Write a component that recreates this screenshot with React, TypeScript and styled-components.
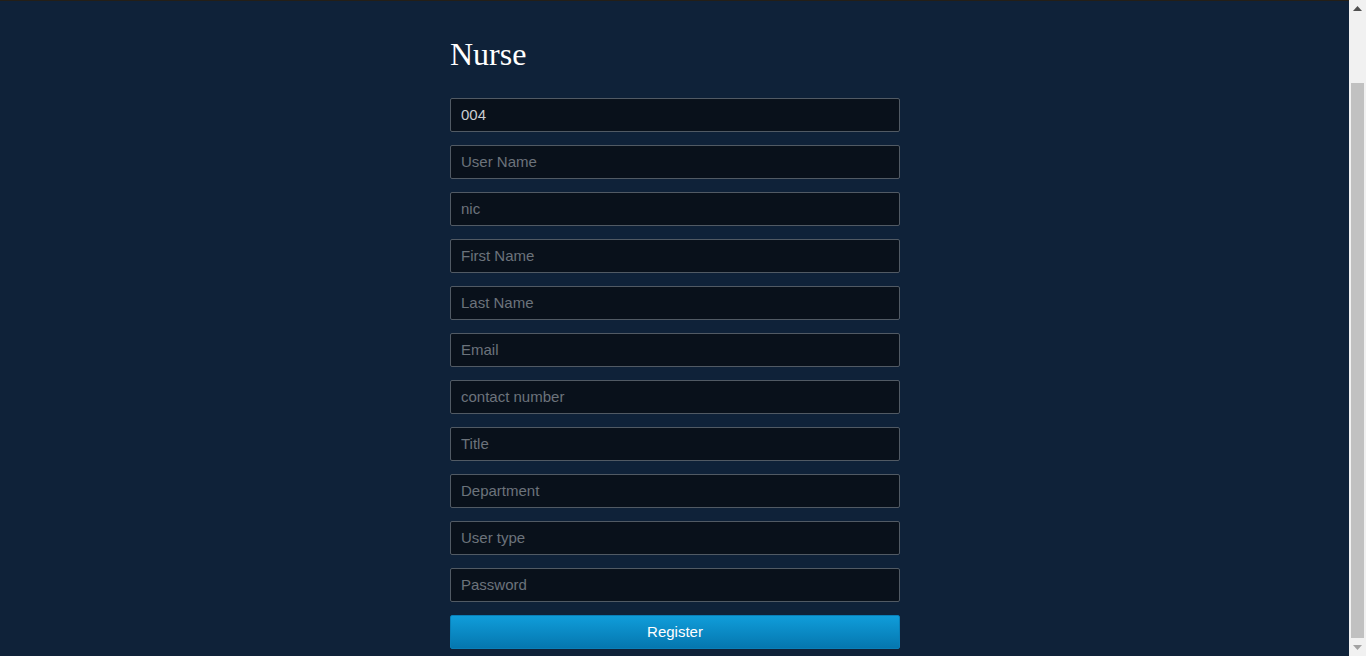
import React from "react";
import styled, { createGlobalStyle } from "styled-components";

const Global = createGlobalStyle`
  html, body { margin: 0; overflow: hidden; background: #0f2239; }
  body { font-family: "Liberation Sans", Arial, sans-serif; }
  * { box-sizing: border-box; }
  input::placeholder { color: #6c737b; opacity: 1; }
`;

const Shell = styled.div`
  display: flex;
  height: 656px;
  width: 100%;
`;

const Viewport = styled.div`
  flex: 1;
  min-width: 0;
  border-top: 1px solid #241f17;
  background: #0f2239;
`;

const Page = styled.main`
  display: flex;
  justify-content: center;
  padding: 35px 0 7px 1px;
`;

const Form = styled.form`
  width: 450px;
  display: flex;
  flex-direction: column;
  gap: 13px;
`;

const Title = styled.h1`
  margin: 0 0 13px;
  font-family: "Liberation Serif", "Times New Roman", serif;
  font-weight: normal;
  font-size: 32px;
  line-height: 36px;
  color: #ffffff;
`;

const Field = styled.input`
  height: 34px;
  width: 100%;
  padding: 0 10px 1px;
  background: #09111b;
  border: 1px solid #515a64;
  border-radius: 2px;
  color: #c9cdd1;
  font-family: "Liberation Sans", Arial, sans-serif;
  font-size: 15px;
  outline: none;
`;

const Button = styled.button`
  height: 34px;
  width: 100%;
  padding: 0 0 1px;
  border: 1px solid #0a7fb8;
  border-radius: 2px;
  background: linear-gradient(to bottom, #109dda, #0577af);
  color: #ffffff;
  font-family: "Liberation Sans", Arial, sans-serif;
  font-size: 15px;
  cursor: pointer;
`;

const Scrollbar = styled.div`
  width: 17px;
  flex: none;
  display: flex;
  flex-direction: column;
  background: #f1f1f1;
`;

const ArrowButton = styled.div`
  height: 17px;
  flex: none;
  display: flex;
  align-items: center;
  justify-content: center;
`;

const Track = styled.div`
  flex: 1;
  display: flex;
  flex-direction: column;
  padding: 66px 2px 1px;
`;

const Thumb = styled.div`
  flex: 1;
  background: #c1c1c1;
`;

const placeholders = [
  "User Name",
  "nic",
  "First Name",
  "Last Name",
  "Email",
  "contact number",
  "Title",
  "Department",
  "User type",
  "Password",
];

export default function App() {
  return (
    <>
      <Global />
      <Shell>
        <Viewport>
          <Page>
            <Form onSubmit={(e) => e.preventDefault()}>
              <Title>Nurse</Title>
              <Field defaultValue="004" />
              {placeholders.map((p) => (
                <Field
                  key={p}
                  placeholder={p}
                  type={p === "Password" ? "password" : "text"}
                />
              ))}
              <Button type="submit">Register</Button>
            </Form>
          </Page>
        </Viewport>
        <Scrollbar>
          <ArrowButton>
            <svg width="9" height="5" viewBox="0 0 9 5">
              <path d="M0 5 L4.5 0 L9 5 Z" fill="#505050" />
            </svg>
          </ArrowButton>
          <Track>
            <Thumb />
          </Track>
          <ArrowButton>
            <svg width="9" height="5" viewBox="0 0 9 5">
              <path d="M0 0 L9 0 L4.5 5 Z" fill="#a3a3a3" />
            </svg>
          </ArrowButton>
        </Scrollbar>
      </Shell>
    </>
  );
}
